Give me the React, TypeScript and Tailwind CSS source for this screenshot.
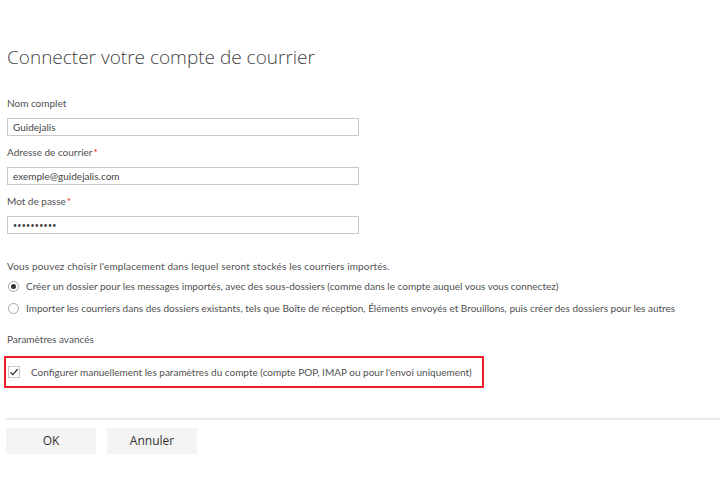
import React from "react";

const font = { fontFamily: "Lato, 'Open Sans', sans-serif" };

function Label({ text, required }: { text: string; required?: boolean }) {
  return (
    <div className="h-[16px] text-[10px] leading-[16px] text-[#505050]">
      {text}
      {required && <span className="text-[#e81123] ml-[1px]">*</span>}
    </div>
  );
}

function Input({ value, small }: { value: string; small?: boolean }) {
  return (
    <div className={`w-[352px] h-[18px] border border-[#c8c8c8] bg-white flex items-center pl-[5px] text-[#444] ${small ? "text-[7px] tracking-[0.3px]" : "text-[10px]"}`}>
      {value}
    </div>
  );
}

function Radio({ checked, text }: { checked?: boolean; text: string }) {
  return (
    <div className="flex items-center h-[22px]">
      <div className="w-[11px] h-[11px] rounded-full border border-[#a6a6a6] ml-[1px] flex items-center justify-center">
        {checked && <div className="w-[5px] h-[5px] rounded-full bg-[#333]" />}
      </div>
      <span className="ml-[7px] text-[10px] text-[#505050]">{text}</span>
    </div>
  );
}

export default function App() {
  return (
    <div className="w-[720px] h-[483px] bg-white overflow-hidden" style={font}>
      <div className="pl-[7px] pt-[44px]">
        <h1 className="text-[19px] leading-[26px] text-[#444]" style={{ fontFamily: "'Open Sans', Lato, sans-serif", fontWeight: 300 }}>
          Connecter votre compte de courrier
        </h1>
        <div className="mt-[25px]">
          <Label text="Nom complet" />
          <div className="mt-[7px]"><Input value="Guidejalis" /></div>
        </div>
        <div className="mt-[8px]">
          <Label text="Adresse de courrier" required />
          <div className="mt-[7px]"><Input value="exemple@guidejalis.com" /></div>
        </div>
        <div className="mt-[8px]">
          <Label text="Mot de passe" required />
          <div className="mt-[7px]"><Input small value="••••••••••" /></div>
        </div>
        <div className="mt-[24px] text-[10px] leading-[16px] text-[#505050] tracking-[0.15px]">
          Vous pouvez choisir l'emplacement dans lequel seront stockés les courriers importés.
        </div>
        <div className="mt-[1px]">
          <Radio checked text="Créer un dossier pour les messages importés, avec des sous-dossiers (comme dans le compte auquel vous vous connectez)" />
          <Radio text="Importer les courriers dans des dossiers existants, tels que Boîte de réception, Éléments envoyés et Brouillons, puis créer des dossiers pour les autres" />
        </div>
        <div className="mt-[12px] text-[10px] leading-[16px] text-[#505050]">Paramètres avancés</div>
      </div>
      <div className="ml-[4px] mt-[9px] w-[480px] h-[32px] border-2 border-[#e8202a] flex items-center">
        <svg width="12" height="12" viewBox="0 0 12 12" className="ml-[2px]">
          <rect x="0.5" y="0.5" width="11" height="11" fill="white" stroke="#c8c8c8" />
          <path d="M2.5 6.2 L4.8 8.6 L9.6 3.2" fill="none" stroke="#333" strokeWidth="1.3" />
        </svg>
        <span className="ml-[11px] text-[10px] text-[#505050]">
          Configurer manuellement les paramètres du compte (compte POP, IMAP ou pour l'envoi uniquement)
        </span>
      </div>
      <div className="ml-[6px] mt-[30px] h-[2px] bg-[#ebebeb]" />
      <div className="ml-[6px] mt-[8px] flex gap-[11px]">
        <button className="w-[90px] h-[26px] bg-[#f4f4f4] text-[12px] text-[#333]" style={{ fontFamily: "'Open Sans', sans-serif", fontWeight: 500 }}>OK</button>
        <button className="w-[90px] h-[26px] bg-[#f4f4f4] text-[12px] text-[#333]" style={{ fontFamily: "'Open Sans', sans-serif", fontWeight: 500 }}>Annuler</button>
      </div>
    </div>
  );
}
